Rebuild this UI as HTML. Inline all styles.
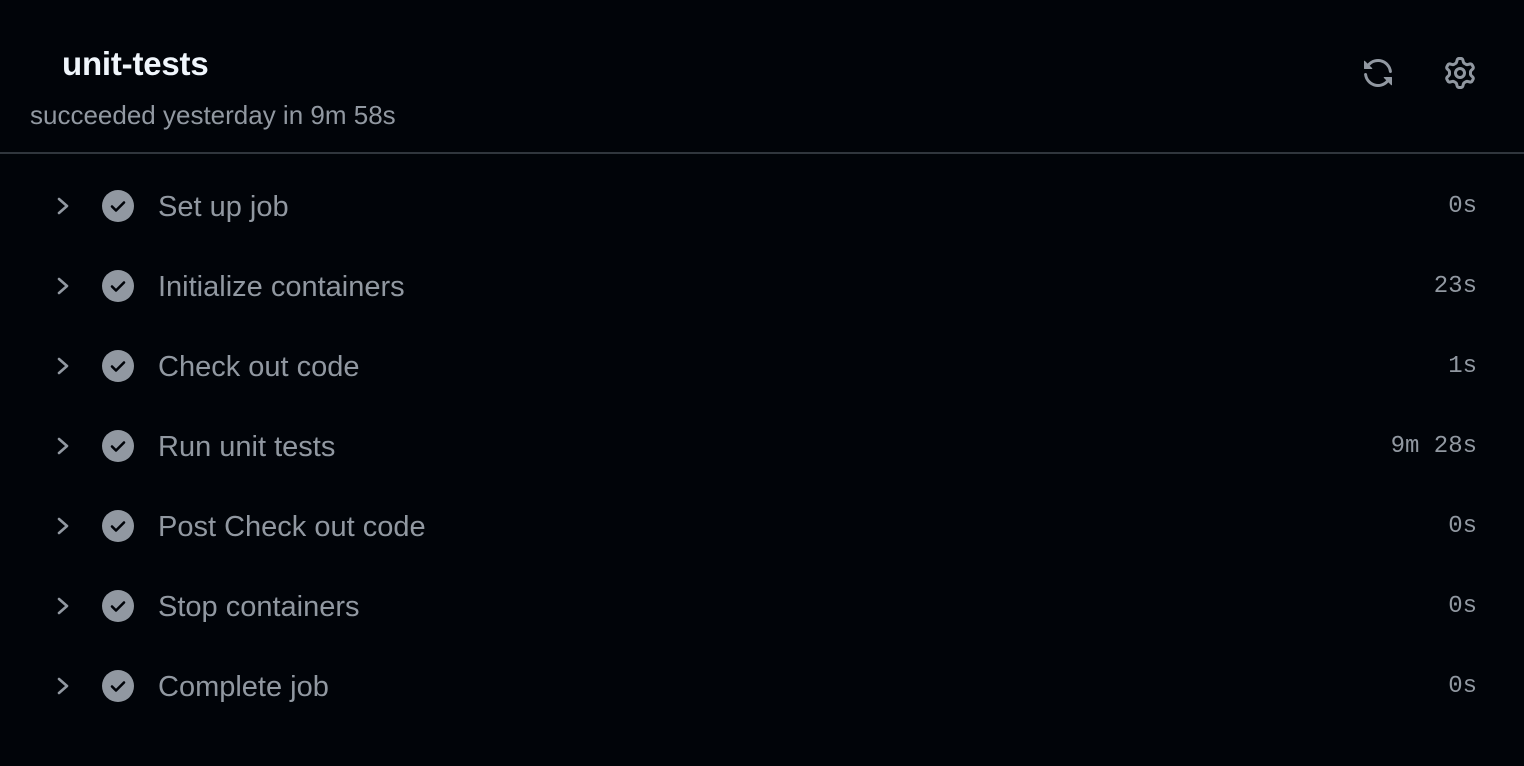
<!DOCTYPE html>
<html><head><meta charset="utf-8"><style>
html,body{margin:0;padding:0;background:#010409;width:1524px;height:746px;overflow:hidden;font-family:"Liberation Sans",sans-serif}
.t{position:absolute;left:62px;top:45px;font-size:33px;font-weight:bold;color:#f0f6fc;letter-spacing:-0.2px}
.s{position:absolute;left:30px;top:100px;font-size:26px;color:#9198a1;letter-spacing:0px}
.hr{position:absolute;left:0;right:0;top:152px;height:2px;background:#30363d}
.row{position:absolute;left:0;width:1524px;height:80px}
.row .c{position:absolute;left:55px;top:-12px}
.row .k{position:absolute;left:102px;top:-16px}
.row .n{position:absolute;left:158px;top:-15px;font-size:29px;color:#9198a1;white-space:nowrap}
.row .d{position:absolute;right:47px;top:-13px;font-family:"Liberation Mono",monospace;font-size:24px;color:#9198a1}
svg{display:block}
</style></head><body>
<div class="t">unit-tests</div>
<div class="s">succeeded yesterday in 9m 58s</div>
<svg style="position:absolute;left:1362px;top:57px" width="32" height="32" viewBox="0 0 16 16" fill="#9198a1"><path d="M1.705 8.005a.75.75 0 0 1 .834.656 5.5 5.5 0 0 0 9.592 2.970l-1.204-1.204a.25.25 0 0 1 .177-.427h3.646a.25.25 0 0 1 .25.25v3.646a.25.25 0 0 1-.427.177l-1.38-1.380A7.002 7.002 0 0 1 1.050 8.840a.75.75 0 0 1 .656-.834ZM8 2.5a5.487 5.487 0 0 0-4.131 1.869l1.204 1.204A.25.25 0 0 1 4.896 6H1.25A.25.25 0 0 1 1 5.75V2.104a.25.25 0 0 1 .427-.177l1.38 1.380A7.002 7.002 0 0 1 14.950 7.160a.75.75 0 0 1-1.490.178A5.5 5.5 0 0 0 8 2.5Z"/></svg>
<svg style="position:absolute;left:1444px;top:57px" width="32" height="32" viewBox="0 0 16 16" fill="#9198a1"><path d="M8 0a8.2 8.2 0 0 1 .701.031C9.444.095 9.99.645 10.16 1.29l.288 1.107c.018.066.079.158.212.224.231.114.454.243.668.386.123.082.233.09.299.071l1.103-.303c.644-.176 1.392.021 1.820.63.27.385.506.792.704 1.218.315.675.111 1.422-.364 1.891l-.814.806c-.049.048-.098.147-.088.294.016.257.016.515 0 .772-.01.147.038.246.088.294l.814.806c.475.469.679 1.216.364 1.891a7.977 7.977 0 0 1-.704 1.217c-.428.61-1.176.807-1.82.63l-1.102-.302c-.067-.019-.177-.011-.3.071a5.909 5.909 0 0 1-.668.386c-.133.066-.194.158-.211.224l-.29 1.106c-.168.646-.715 1.196-1.458 1.260a8.006 8.006 0 0 1-1.402 0c-.743-.064-1.289-.614-1.458-1.260l-.289-1.106c-.018-.066-.079-.158-.212-.224a5.738 5.738 0 0 1-.668-.386c-.123-.082-.233-.09-.299-.071l-1.103.303c-.644.176-1.392-.021-1.82-.63a8.12 8.12 0 0 1-.704-1.218c-.315-.675-.111-1.422.363-1.891l.815-.806c.05-.048.098-.147.088-.294a6.214 6.214 0 0 1 0-.772c.01-.147-.038-.246-.088-.294l-.815-.806C.635 6.045.431 5.298.746 4.623a7.92 7.92 0 0 1 .704-1.217c.428-.61 1.176-.807 1.82-.63l1.102.302c.067.019.177.011.3-.071.214-.143.437-.272.668-.386.133-.066.194-.158.211-.224l.29-1.106C6.009.645 6.556.095 7.299.03 7.53.01 7.764 0 8 0Zm-.571 1.525c-.036.003-.108.036-.137.146l-.289 1.105c-.147.561-.549.967-.998 1.189-.173.086-.34.183-.5.29-.417.278-.97.423-1.529.27l-1.103-.303c-.109-.03-.175.016-.195.045-.22.312-.412.644-.573.99-.014.031-.021.11.059.19l.815.806c.411.406.562.957.53 1.456a4.709 4.709 0 0 0 0 .582c.032.499-.119 1.05-.53 1.456l-.815.806c-.081.08-.073.159-.059.19.162.346.353.677.573.989.02.03.085.076.195.046l1.102-.303c.56-.153 1.113-.008 1.53.27.161.107.328.204.501.29.447.222.85.629.997 1.189l.289 1.105c.029.109.101.143.137.146a6.6 6.6 0 0 0 1.142 0c.036-.003.108-.036.137-.146l.289-1.105c.147-.561.549-.967.998-1.189.173-.086.34-.183.5-.29.417-.278.97-.423 1.529-.27l1.103.303c.109.029.175-.016.195-.045.22-.313.411-.644.573-.99.014-.031.021-.11-.059-.19l-.815-.806c-.411-.406-.562-.957-.53-1.456a4.709 4.709 0 0 0 0-.582c-.032-.499.119-1.05.53-1.456l.815-.806c.081-.08.073-.159.059-.19a6.464 6.464 0 0 0-.573-.989c-.02-.03-.085-.076-.195-.046l-1.102.303c-.56.153-1.113.008-1.53-.27a4.44 4.44 0 0 0-.501-.29c-.447-.222-.85-.629-.997-1.189l-.289-1.105c-.029-.11-.101-.143-.137-.146a6.6 6.6 0 0 0-1.142 0ZM11 8a3 3 0 1 1-6 0 3 3 0 0 1 6 0ZM9.5 8a1.5 1.5 0 1 0-3.001.001A1.5 1.5 0 0 0 9.5 8Z"/></svg>
<div class="hr"></div>

<div class="row" style="top:206px"><svg class="c" width="18" height="24" viewBox="0 0 18 24"><path d="M4 5l8 7-8 7" fill="none" stroke="#9198a1" stroke-width="2.6" stroke-linecap="round" stroke-linejoin="round"/></svg><svg class="k" width="32" height="32" viewBox="0 0 32 32"><circle cx="16" cy="16" r="16" fill="#9198a1"/><path d="M10 16.5l4 4 8-8" fill="none" stroke="#010409" stroke-width="2.6" stroke-linecap="round" stroke-linejoin="round"/></svg><div class="n">Set up job</div><div class="d">0s</div></div>
<div class="row" style="top:286px"><svg class="c" width="18" height="24" viewBox="0 0 18 24"><path d="M4 5l8 7-8 7" fill="none" stroke="#9198a1" stroke-width="2.6" stroke-linecap="round" stroke-linejoin="round"/></svg><svg class="k" width="32" height="32" viewBox="0 0 32 32"><circle cx="16" cy="16" r="16" fill="#9198a1"/><path d="M10 16.5l4 4 8-8" fill="none" stroke="#010409" stroke-width="2.6" stroke-linecap="round" stroke-linejoin="round"/></svg><div class="n">Initialize containers</div><div class="d">23s</div></div>
<div class="row" style="top:366px"><svg class="c" width="18" height="24" viewBox="0 0 18 24"><path d="M4 5l8 7-8 7" fill="none" stroke="#9198a1" stroke-width="2.6" stroke-linecap="round" stroke-linejoin="round"/></svg><svg class="k" width="32" height="32" viewBox="0 0 32 32"><circle cx="16" cy="16" r="16" fill="#9198a1"/><path d="M10 16.5l4 4 8-8" fill="none" stroke="#010409" stroke-width="2.6" stroke-linecap="round" stroke-linejoin="round"/></svg><div class="n">Check out code</div><div class="d">1s</div></div>
<div class="row" style="top:446px"><svg class="c" width="18" height="24" viewBox="0 0 18 24"><path d="M4 5l8 7-8 7" fill="none" stroke="#9198a1" stroke-width="2.6" stroke-linecap="round" stroke-linejoin="round"/></svg><svg class="k" width="32" height="32" viewBox="0 0 32 32"><circle cx="16" cy="16" r="16" fill="#9198a1"/><path d="M10 16.5l4 4 8-8" fill="none" stroke="#010409" stroke-width="2.6" stroke-linecap="round" stroke-linejoin="round"/></svg><div class="n">Run unit tests</div><div class="d">9m 28s</div></div>
<div class="row" style="top:526px"><svg class="c" width="18" height="24" viewBox="0 0 18 24"><path d="M4 5l8 7-8 7" fill="none" stroke="#9198a1" stroke-width="2.6" stroke-linecap="round" stroke-linejoin="round"/></svg><svg class="k" width="32" height="32" viewBox="0 0 32 32"><circle cx="16" cy="16" r="16" fill="#9198a1"/><path d="M10 16.5l4 4 8-8" fill="none" stroke="#010409" stroke-width="2.6" stroke-linecap="round" stroke-linejoin="round"/></svg><div class="n">Post Check out code</div><div class="d">0s</div></div>
<div class="row" style="top:606px"><svg class="c" width="18" height="24" viewBox="0 0 18 24"><path d="M4 5l8 7-8 7" fill="none" stroke="#9198a1" stroke-width="2.6" stroke-linecap="round" stroke-linejoin="round"/></svg><svg class="k" width="32" height="32" viewBox="0 0 32 32"><circle cx="16" cy="16" r="16" fill="#9198a1"/><path d="M10 16.5l4 4 8-8" fill="none" stroke="#010409" stroke-width="2.6" stroke-linecap="round" stroke-linejoin="round"/></svg><div class="n">Stop containers</div><div class="d">0s</div></div>
<div class="row" style="top:686px"><svg class="c" width="18" height="24" viewBox="0 0 18 24"><path d="M4 5l8 7-8 7" fill="none" stroke="#9198a1" stroke-width="2.6" stroke-linecap="round" stroke-linejoin="round"/></svg><svg class="k" width="32" height="32" viewBox="0 0 32 32"><circle cx="16" cy="16" r="16" fill="#9198a1"/><path d="M10 16.5l4 4 8-8" fill="none" stroke="#010409" stroke-width="2.6" stroke-linecap="round" stroke-linejoin="round"/></svg><div class="n">Complete job</div><div class="d">0s</div></div>
</body></html>
